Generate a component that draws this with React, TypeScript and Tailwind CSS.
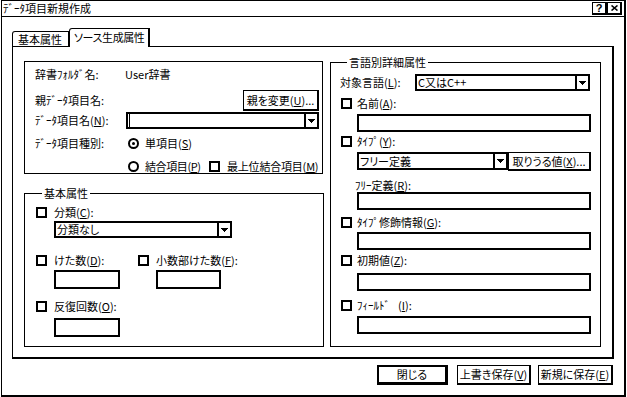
import React from "react";

// small helpers for the monochrome win95 controls
const U = ({ children }: { children: React.ReactNode }) => (
    <span className="underline underline-offset-[1px]">{children}</span>
);

const Check = ({ cls = "" }: { cls?: string }) => (
    <span className={`inline-block w-[11px] h-[11px] border-2 border-black bg-white shrink-0 ${cls}`} />
);

const Radio = ({ on = false }: { on?: boolean }) => (
    <span className="inline-flex w-[11px] h-[11px] rounded-full border-2 border-black bg-white items-center justify-center shrink-0">
        {on && <span className="w-[3px] h-[3px] rounded-full bg-black" />}
    </span>
);

const Arrow = () => (
    <svg width="7" height="4" viewBox="0 0 7 4" shapeRendering="crispEdges">
        <path d="M0 0H7L3.5 4Z" fill="#000" />
    </svg>
);

const Combo = ({ cls, children }: { cls: string; children?: React.ReactNode }) => (
    <div className={`flex border-2 border-black bg-white ${cls}`}>
        <div className="flex-1 flex items-center pl-[1px] whitespace-nowrap">{children}</div>
        <div className="w-[13px] border-l-2 border-black flex items-center justify-center">
            <Arrow />
        </div>
    </div>
);

const Btn = ({ cls, children }: { cls: string; children: React.ReactNode }) => (
    <button className={`flex items-center justify-center whitespace-nowrap bg-white border-l border-t border-r-2 border-b-2 border-black ${cls}`}>
        {children}
    </button>
);

const Box = ({ cls }: { cls: string }) => <div className={`border-2 border-black bg-white ${cls}`} />;

const TitleBtn = ({ children }: { children: React.ReactNode }) => (
    <div className="w-[15px] h-[13px] flex items-center justify-center border-l border-t border-r-2 border-b-2 border-black font-['Liberation_Sans',sans-serif] font-bold text-[11px] leading-none">
        {children}
    </div>
);

export default function App() {
    return (
        <div className="w-[627px] h-[397px] bg-white text-black overflow-hidden whitespace-nowrap font-['Noto_Sans_CJK_JP',sans-serif] text-[11px] leading-[13px] [font-feature-settings:'palt']">
            <div className="ml-[1px] w-[625px] h-[397px] border-l border-t border-r-2 border-b-2 border-black flex flex-col">
                {/* title bar */}
                <div className="h-[16px] shrink-0 border-b border-black flex items-center justify-between pl-[1px] pr-[2px]">
                    <span>ﾃﾞｰﾀ項目新規作成</span>
                    <div className="flex">
                        <TitleBtn>?</TitleBtn>
                        <TitleBtn>
                            <svg width="7" height="6" viewBox="0 0 7 6">
                                <path d="M0.5 0.5L6.5 5.5M6.5 0.5L0.5 5.5" stroke="#000" strokeWidth="1.6" />
                            </svg>
                        </TitleBtn>
                    </div>
                </div>

                {/* tabs */}
                <div className="mt-[11px] ml-[10px] h-[18px] shrink-0 flex items-end relative z-10">
                    <div className="w-[57px] h-[15px] border-l border-t border-r border-black rounded-tl-[3px] pl-[5px] flex items-center">
                        基本属性
                    </div>
                    <div className="w-[81px] h-[19px] -mb-px bg-white border-l border-t border-r-2 border-black rounded-tl-[3px] pl-[4px] pb-[1px] flex items-center tracking-[-0.4px]">
                        ソース生成属性
                    </div>
                </div>

                {/* tab panel */}
                <div className="ml-[10px] w-[602px] h-[313px] shrink-0 border-l border-t border-r-2 border-b-2 border-black flex items-start pt-[9px] pl-[11px]">
                    <div className="w-[300px] mt-[5px] flex flex-col">
                        {/* top box */}
                        <div className="w-[299px] h-[113px] border border-black pl-[10px] pr-[3px] pt-[4px]">
                            <div className="h-[16px] flex items-center">
                                <span className="w-[90px]">辞書ﾌｫﾙﾀﾞ名:</span>
                                <span>User辞書</span>
                            </div>
                            <div className="mt-[8px] h-[21px] flex items-center justify-between">
                                <span>親ﾃﾞｰﾀ項目名:</span>
                                <Btn cls="w-[76px] h-[21px]">親を変更(<U>U</U>)...</Btn>
                            </div>
                            <div className="mt-[1px] h-[17px] flex items-center">
                                <span className="w-[91px]">ﾃﾞｰﾀ項目名(<U>N</U>):</span>
                                <Combo cls="w-[193px] h-[17px]">
                                    <span className="w-[1px] h-[13px] bg-black" />
                                </Combo>
                            </div>
                            <div className="mt-[7px] h-[14px] flex items-center">
                                <span className="w-[93px]">ﾃﾞｰﾀ項目種別:</span>
                                <Radio on />
                                <span className="ml-[6px]">単項目(<U>S</U>)</span>
                            </div>
                            <div className="mt-[9px] h-[14px] flex items-center pl-[93px]">
                                <Radio />
                                <span className="ml-[6px] w-[58px] tracking-[-0.4px]">結合項目(<U>P</U>)</span>
                                <Check cls="ml-[6px]" />
                                <span className="ml-[7px] tracking-[-0.2px]">最上位結合項目(<U>M</U>)</span>
                            </div>
                        </div>

                        {/* 基本属性 group */}
                        <fieldset className="mt-[13px] w-[300px] h-[160px] border border-black pl-[11px]">
                            <legend className="ml-[6px] px-[2px] leading-[13px]">基本属性</legend>
                            <div className="mt-[5px] h-[14px] flex items-center">
                                <Check />
                                <span className="ml-[7px]">分類(<U>C</U>):</span>
                            </div>
                            <Combo cls="mt-[2px] ml-[18px] w-[178px] h-[17px]">分類なし</Combo>
                            <div className="mt-[15px] h-[14px] flex items-center">
                                <div className="w-[102px] flex items-center">
                                    <Check />
                                    <span className="ml-[7px]">けた数(<U>D</U>):</span>
                                </div>
                                <Check />
                                <span className="ml-[7px]">小数部けた数(<U>F</U>):</span>
                            </div>
                            <div className="mt-[3px] flex">
                                <Box cls="ml-[18px] w-[66px] h-[19px]" />
                                <Box cls="ml-[36px] w-[65px] h-[19px]" />
                            </div>
                            <div className="mt-[10px] h-[14px] flex items-center">
                                <Check />
                                <span className="ml-[7px]">反復回数(<U>O</U>):</span>
                            </div>
                            <Box cls="mt-[5px] ml-[18px] w-[66px] h-[19px]" />
                        </fieldset>
                    </div>

                    {/* 言語別詳細属性 group */}
                    <fieldset className="ml-[6px] w-[271px] h-[291px] border border-black pl-[9px]">
                        <legend className="ml-[7px] px-[2px] leading-[13px]">言語別詳細属性</legend>
                        <div className="mt-[5px] h-[17px] flex items-center">
                            <span className="w-[75px]">対象言語(<U>L</U>):</span>
                            <Combo cls="w-[175px] h-[17px]">C又はC++</Combo>
                        </div>
                        <div className="mt-[5px] h-[14px] flex items-center pl-[1px]">
                            <Check />
                            <span className="ml-[5px]">名前(<U>A</U>):</span>
                        </div>
                        <Box cls="mt-[4px] ml-[17px] w-[234px] h-[18px]" />
                        <div className="mt-[2px] h-[14px] flex items-center pl-[1px]">
                            <Check />
                            <span className="ml-[5px]">ﾀｲﾌﾟ(<U>Y</U>):</span>
                        </div>
                        <div className="mt-[4px] flex items-start ml-[17px]">
                            <Combo cls="w-[151px] h-[18px]">フリー定義</Combo>
                            <Btn cls="w-[83px] h-[19px]">取りうる値(<U>X</U>)...</Btn>
                        </div>
                        <div className="mt-[7px] h-[14px] flex items-center ml-[15px]">
                            ﾌﾘｰ定義(<U>R</U>):
                        </div>
                        <Box cls="ml-[17px] w-[234px] h-[18px]" />
                        <div className="mt-[5px] h-[14px] flex items-center pl-[1px]">
                            <Check />
                            <span className="ml-[5px]">ﾀｲﾌﾟ修飾情報(<U>G</U>):</span>
                        </div>
                        <Box cls="mt-[3px] ml-[17px] w-[234px] h-[18px]" />
                        <div className="mt-[3px] h-[14px] flex items-center pl-[1px]">
                            <Check />
                            <span className="ml-[5px]">初期値(<U>Z</U>):</span>
                        </div>
                        <Box cls="mt-[6px] ml-[17px] w-[234px] h-[18px]" />
                        <div className="mt-[7px] h-[14px] flex items-center pl-[1px]">
                            <Check />
                            <span className="ml-[5px]">ﾌｨｰﾙﾄﾞ</span>
                            <span className="ml-[8px]">(<U>I</U>):</span>
                        </div>
                        <Box cls="mt-[4px] ml-[17px] w-[234px] h-[18px]" />
                    </fieldset>
                </div>

                {/* bottom buttons */}
                <div className="mt-[6px] flex justify-end pr-[11px]">
                    <button className="w-[71px] h-[20px] flex items-center justify-center bg-white border-2 border-r-[3px] border-b-[3px] border-black">
                        閉じる
                    </button>
                    <Btn cls="ml-[9px] w-[74px] h-[20px]">上書き保存(<U>V</U>)</Btn>
                    <Btn cls="ml-[7px] w-[75px] h-[20px]">新規に保存(<U>E</U>)</Btn>
                </div>
            </div>
        </div>
    );
}
